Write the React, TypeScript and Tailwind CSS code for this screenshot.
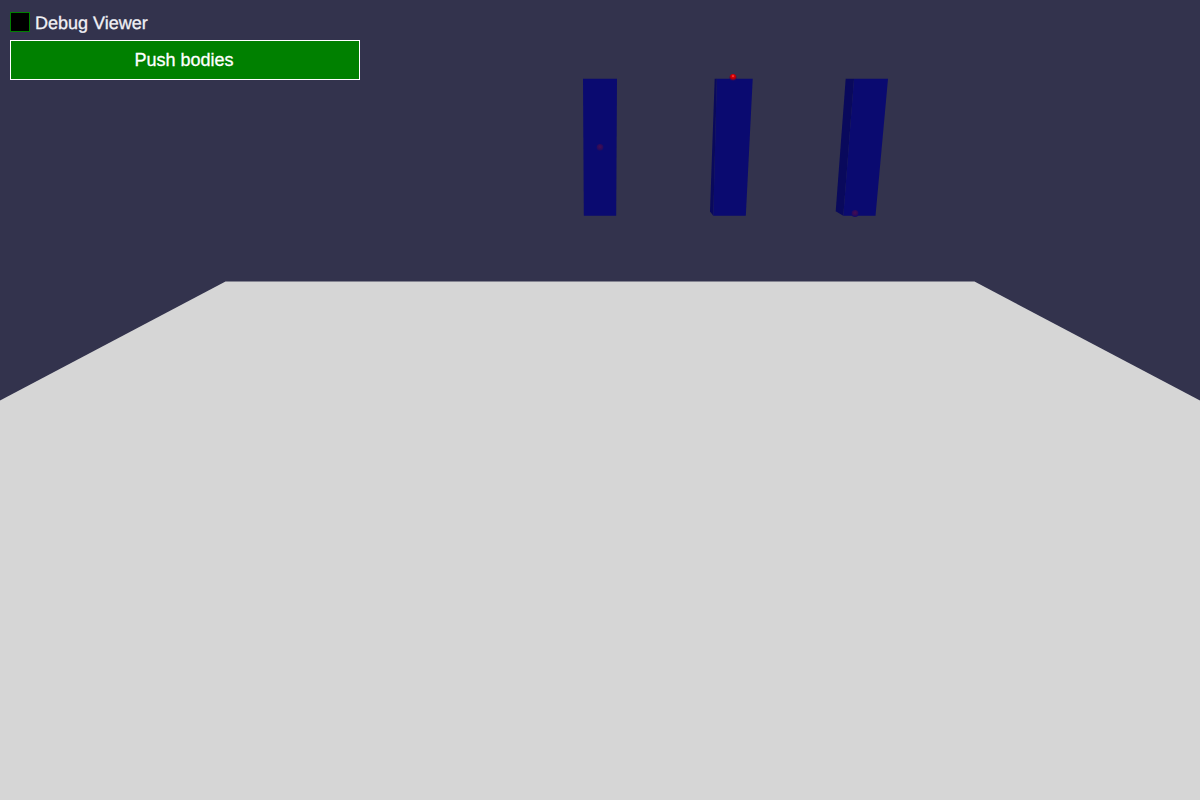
export default function App() {
  return (
    <div className="relative h-[800px] w-[1200px] overflow-hidden bg-[#33334d] font-['Liberation_Sans',Arial,sans-serif] text-white [text-rendering:geometricPrecision]">
      <svg className="absolute inset-0" width="1200" height="800" viewBox="0 0 1200 800">
        <defs>
          <radialGradient id="red" cx="50%" cy="30%" r="65%">
            <stop offset="0%" stopColor="#ff6060" />
            <stop offset="30%" stopColor="#e00000" />
            <stop offset="65%" stopColor="#a00010" />
            <stop offset="100%" stopColor="#180a68" />
          </radialGradient>
          <radialGradient id="dim" cx="50%" cy="40%" r="60%">
            <stop offset="0%" stopColor="#480c50" />
            <stop offset="70%" stopColor="#280a5c" />
            <stop offset="100%" stopColor="#0e0a6c" />
          </radialGradient>
        </defs>
        <polygon points="225.5,281.5 974.5,281.5 1200,400.5 1200,800 0,800 0,400.5" fill="#d6d6d6" />
        <polygon points="583,78.7 617,78.7 616.2,215.7 583.8,215.7" fill="#0a0a70" />
        <circle cx="600" cy="147.5" r="3.5" fill="url(#dim)" />
        <polygon points="714.7,78.7 716.8,78.7 713.3,215.7 710,211.5" fill="#09095c" />
        <polygon points="716.8,78.7 752.7,78.7 745.8,215.7 713.3,215.7" fill="#0a0a70" />
        <circle cx="733" cy="77.5" r="3.5" fill="url(#red)" />
        <polygon points="845.7,78.7 854,78.7 843.3,215.7 835.7,211.2" fill="#09095c" />
        <polygon points="854,78.7 888,78.7 875.5,215.7 843.3,215.7" fill="#0a0a70" />
        <circle cx="855" cy="213.5" r="3.5" fill="url(#dim)" />
      </svg>
      <div className="absolute left-[10px] top-[12px] flex w-[350px] flex-col gap-2">
        <label className="flex h-5 items-center gap-[5px] text-[18px] leading-5 text-[#f0f0f5] [-webkit-text-stroke:0.3px_#f0f0f5]">
          <span className="h-5 w-5 border border-[#008000] bg-black" />
          <span className="pt-[2px]">Debug Viewer</span>
        </label>
        <button className="h-10 w-full border border-white bg-[#008000] pr-[2px] text-[18px] text-white [-webkit-text-stroke:0.3px_#ffffff]">Push bodies</button>
      </div>
    </div>
  );
}
